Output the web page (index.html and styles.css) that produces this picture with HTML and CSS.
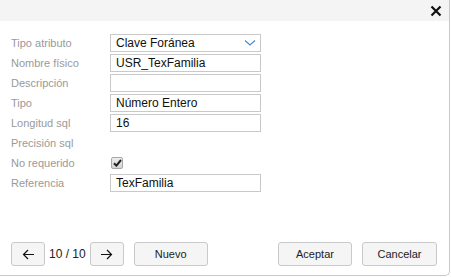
FILE: index.html
```html
<!DOCTYPE html>
<html>
<head>
<meta charset="utf-8">
<link rel="stylesheet" href="styles.css">
</head>
<body>
<div class="dialog">
  <div class="header">
    <button class="close" aria-label="Cerrar">
      <svg width="12" height="12" viewBox="0 0 12 12"><path d="M1.5 1.5 L10.5 10.5 M10.5 1.5 L1.5 10.5" stroke="#111" stroke-width="2.2" fill="none"/></svg>
    </button>
  </div>
  <div class="form">
    <div class="row"><label>Tipo atributo</label>
      <div class="field select"><span>Clave Foránea</span>
        <svg width="12" height="8" viewBox="0 0 12 8"><path d="M1 1.5 L6 6 L11 1.5" stroke="#4a8bd0" stroke-width="1.2" fill="none"/></svg>
      </div>
    </div>
    <div class="row"><label>Nombre físico</label><div class="field">USR_TexFamilia</div></div>
    <div class="row"><label>Descripción</label><div class="field"></div></div>
    <div class="row"><label>Tipo</label><div class="field">Número Entero</div></div>
    <div class="row"><label>Longitud sql</label><div class="field">16</div></div>
    <div class="row"><label>Precisión sql</label></div>
    <div class="row"><label>No requerido</label>
      <div class="check"><svg width="9" height="8" viewBox="0 0 9 8"><path d="M1 4.2 L3.4 6.6 L8 1" stroke="#222" stroke-width="2" fill="none"/></svg></div>
    </div>
    <div class="row"><label>Referencia</label><div class="field">TexFamilia</div></div>
  </div>
  <div class="footer">
    <button class="btn arrow"><svg width="13" height="11" viewBox="0 0 13 11"><path d="M12 5.5 H1.5 M6 1 L1.5 5.5 L6 10" stroke="#111" stroke-width="1.2" fill="none"/></svg></button>
    <span class="count">10 / 10</span>
    <button class="btn arrow"><svg width="13" height="11" viewBox="0 0 13 11"><path d="M1 5.5 H11.5 M7 1 L11.5 5.5 L7 10" stroke="#111" stroke-width="1.2" fill="none"/></svg></button>
    <button class="btn wide nuevo">Nuevo</button>
    <span class="spacer"></span>
    <button class="btn wide">Aceptar</button>
    <button class="btn wide">Cancelar</button>
  </div>
</div>
</body>
</html>
```
FILE: styles.css
```css
* { box-sizing: border-box; }
html, body { margin: 0; padding: 0; background: #fff; }
body { font-family: "Liberation Sans", Arial, sans-serif; width: 451px; height: 278px; overflow: hidden; }
.dialog {
  width: 450px;
  height: 276px;
  border-right: 1px solid #c8c8c8;
  border-bottom: 1px solid #c8c8c8;
  border-bottom-right-radius: 5px;
  display: flex;
  flex-direction: column;
}
.header {
  height: 21px;
  background: #f4f4f4;
  display: flex;
  justify-content: flex-end;
  align-items: center;
  padding-right: 7px;
}
.close { border: 0; background: none; padding: 0; width: 12px; height: 12px; display: flex; }
.form { padding: 13px 0 0 11px; display: flex; flex-direction: column; gap: 2px; }
.row { height: 18px; display: flex; align-items: center; }
.row label { width: 99px; font-size: 11px; color: #9a9a9a; }
.field {
  width: 151px; height: 18px;
  border: 1px solid #c9c9c9;
  font-size: 12px; color: #111;
  padding: 0 5px;
  display: flex; align-items: center;
}
.select { justify-content: space-between; padding-right: 4px; }
.check {
  width: 12px; height: 12px; margin-left: 1px;
  border: 1px solid #a8a8a8; border-radius: 2px;
  background: linear-gradient(#eeeeee, #d4d4d4);
  display: flex; align-items: center; justify-content: center;
}
.footer {
  margin-top: auto;
  padding: 0 12px 9px 11px;
  display: flex; align-items: center;
}
.btn {
  height: 24px;
  border: 1px solid #c9c9c9;
  border-radius: 3px;
  background: #f5f5f5;
  font-family: "Liberation Sans", Arial, sans-serif;
  font-size: 11px; color: #222;
  padding: 0;
  display: flex; align-items: center; justify-content: center;
}
.arrow { width: 34px; }
.count { font-size: 12px; color: #222; margin: 0 4px; }
.wide { width: 74px; }
.nuevo { margin-left: 10px; }
.spacer { flex: 1; }
.wide + .wide { margin-left: 10px; width: 75px; }
```
